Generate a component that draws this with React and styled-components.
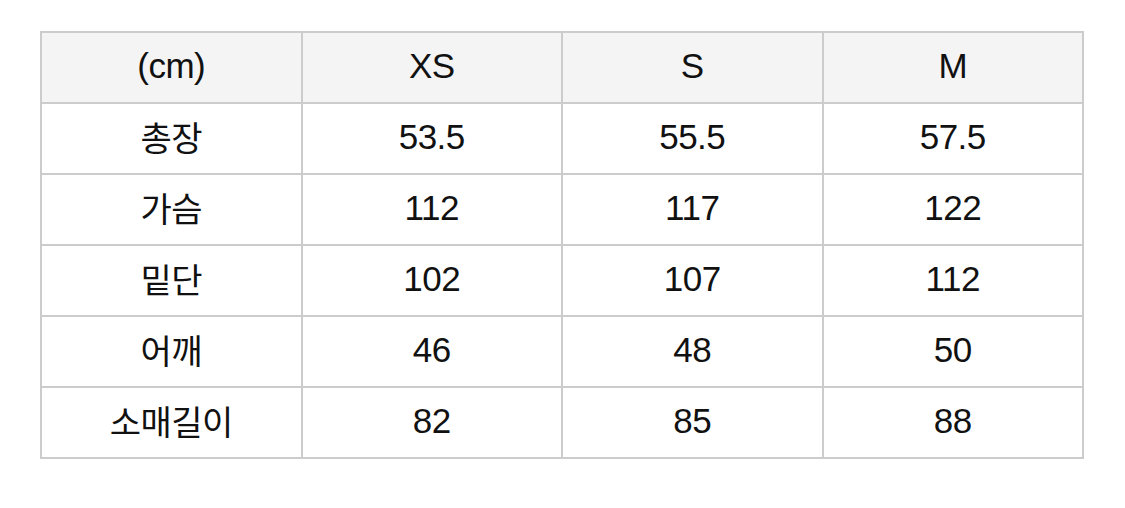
import React from 'react';
import styled, { createGlobalStyle } from 'styled-components';

const GlobalStyle = createGlobalStyle`
    body {
        margin: 0;
        background: #ffffff;
        font-family: "Liberation Sans", "Noto Sans CJK KR", sans-serif;
    }
`;

const Page = styled.div`
    padding: 31px 0 0 40px;
`;

const Table = styled.table`
    width: 1044px;
    table-layout: fixed;
    border-collapse: collapse;
    border: 2px solid #cccccc;
`;

const Row = styled.tr`
    height: 71px;
    background: ${props => props.head ? '#f4f4f4' : '#ffffff'};
`;

const Cell = styled.td`
    border: 2px solid #cccccc;
    padding: 0 0 4px;
    text-align: center;
    vertical-align: middle;
    color: #111111;
    font-size: 35px;
    letter-spacing: -0.5px;
`;

const Label = styled.span`
    font-family: "Noto Sans CJK KR", sans-serif;
    font-size: 34px;
    letter-spacing: -0.5px;
`;

const sizes = ['XS', 'S', 'M'];

const rows = [
    { label: '총장', values: ['53.5', '55.5', '57.5'] },
    { label: '가슴', values: ['112', '117', '122'] },
    { label: '밑단', values: ['102', '107', '112'] },
    { label: '어깨', values: ['46', '48', '50'] },
    { label: '소매길이', values: ['82', '85', '88'] },
];

export default function App() {
    return (
        <Page>
            <GlobalStyle />
            <Table>
                <tbody>
                    <Row head>
                        <Cell>(cm)</Cell>
                        {sizes.map(s => <Cell key={s}>{s}</Cell>)}
                    </Row>
                    {rows.map(r => (
                        <Row key={r.label}>
                            <Cell><Label>{r.label}</Label></Cell>
                            {r.values.map((v, i) => <Cell key={i}>{v}</Cell>)}
                        </Row>
                    ))}
                </tbody>
            </Table>
        </Page>
    );
}
